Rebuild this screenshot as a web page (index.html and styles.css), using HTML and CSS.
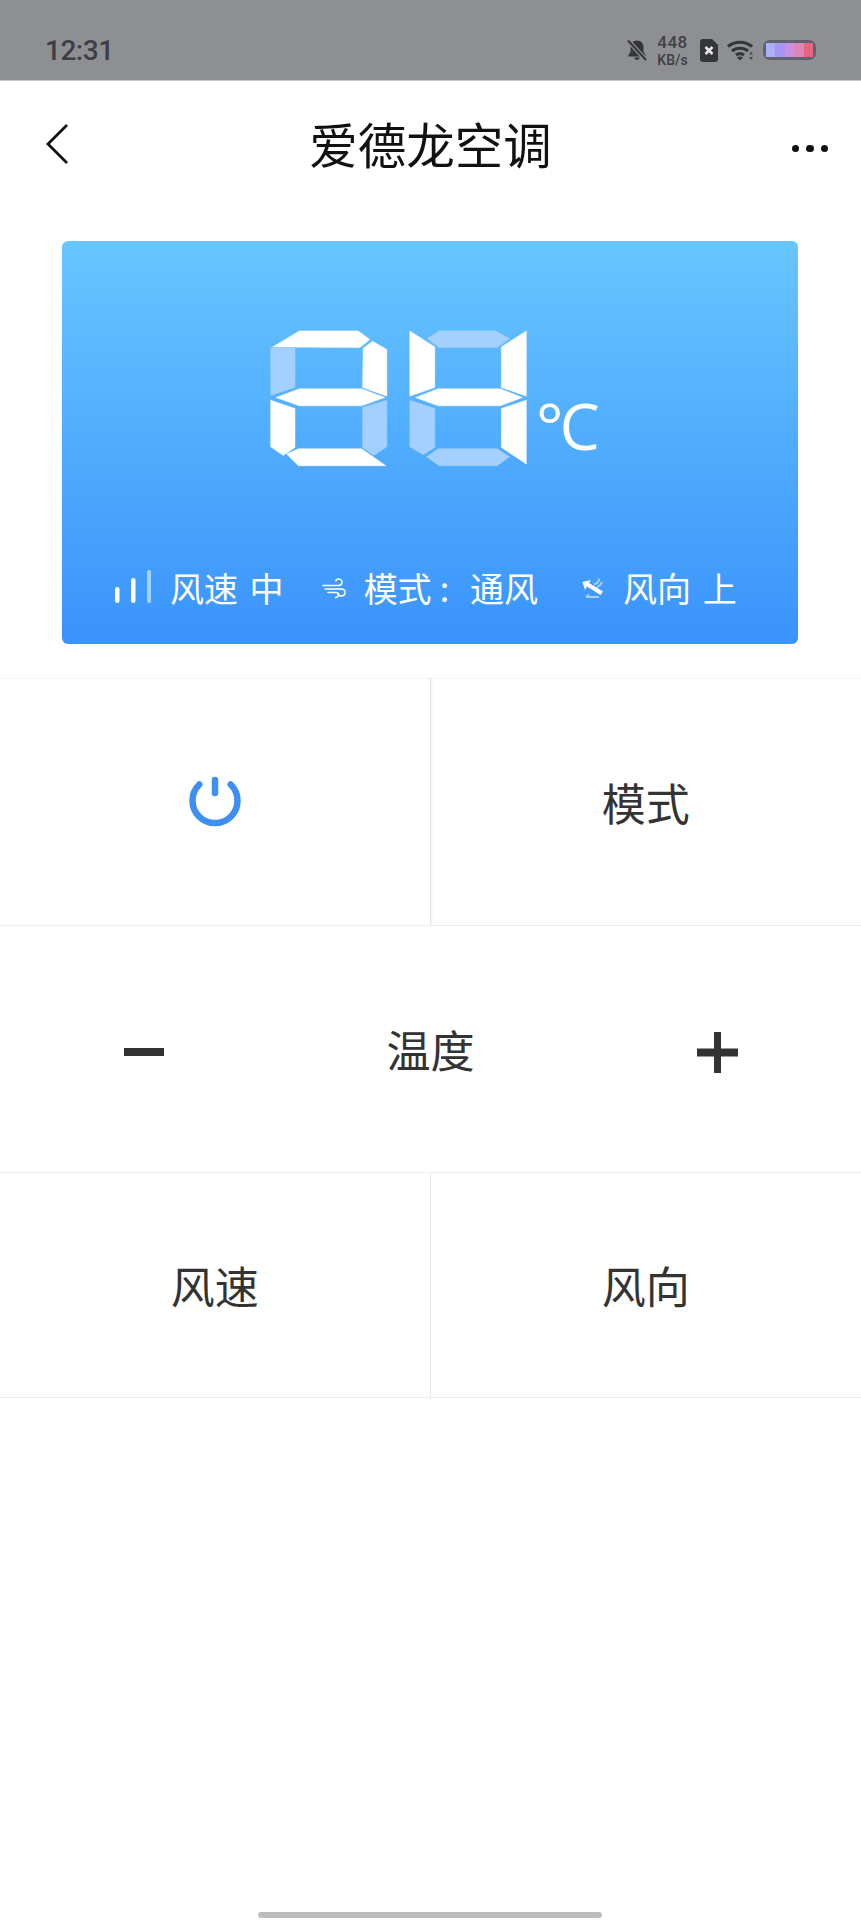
FILE: index.html
```html
<!DOCTYPE html>
<html lang="zh-CN">
<head>
<meta charset="utf-8">
<title>爱德龙空调</title>
<link rel="stylesheet" href="styles.css">
</head>
<body>
<div class="screen">
  <header class="status">
    <span class="time">12:31</span>
    <div class="status-icons">
      <svg class="bell" viewBox="0 0 20 22" width="20" height="22"><path d="M10 1.500c-3.800 0-6.500 2.800-6.500 6.400v5.200L1.500 16v1.500h17V16l-2-2.900V7.900c0-3.600-2.700-6.400-6.500-6.400zM7.300 18.500c.3 1.600 1.400 2.500 2.700 2.500s2.400-.9 2.700-2.500z" fill="#35363b"/><path d="M1 1.500 19 21" stroke="#8e8f93" stroke-width="4.500"/><path d="M1 1.500 19 21" stroke="#35363b" stroke-width="2"/></svg>
      <div class="speed"><span>448</span><span>KB/s</span></div>
      <svg class="sim" viewBox="0 0 18 23" width="18" height="23"><path d="M3 0h9l6 6v14a3 3 0 0 1-3 3H3a3 3 0 0 1-3-3V3a3 3 0 0 1 3-3z" fill="#35363b"/><path d="M5.500 8l7 7M12.500 8l-7 7" stroke="#e8e8ea" stroke-width="2.600"/></svg>
      <svg class="wifi" viewBox="0 0 27 20" width="27" height="20"><g fill="none" stroke="#35363b" stroke-width="3.200"><path d="M1 6.500C7.500 .8 18.500 .8 25 6.500"/><path d="M5 11c4.500-3.700 11.500-3.700 16 0"/><path d="M9 15c2.600-1.900 5.400-1.900 8 0"/></g><path d="M10 17.500c2-1.200 4-1.200 6 0L13 20.500z" fill="#35363b"/><path d="M24 11.500l-2 3h4zM24 20l-2-3h4z" fill="#4a4b50"/></svg>
      <div class="battery"><span class="cell c1"></span><span class="cell c2"></span><span class="cell c3"></span><span class="cell c4"></span><span class="cell c5"></span></div>
    </div>
  </header>

  <nav class="nav">
    <svg class="back" viewBox="0 0 22 40" width="22" height="40"><path d="M21 1 2 20l19 19" fill="none" stroke="#111" stroke-width="2.800"/></svg>
    <h1 class="title">爱德龙空调</h1>
    <div class="more"><i></i><i></i><i></i></div>
  </nav>

  <section class="card">
    <div class="display">
      <svg class="digits" viewBox="60 60 772 410" width="257" height="137">
        <g class="seg-on">
          <polygon points="68,110 148,62 325,62 360,88 330,112"/>
          <polygon points="340,114 368,93 411,118 411,258 338,232"/>
          <polygon points="78,262 148,236 335,236 405,262 335,287 148,287"/>
          <polygon points="62,270 135,295 135,412 100,436 62,410"/>
          <polygon points="110,432 145,416 335,416 408,467 145,467"/>
          <polygon points="480,62 555,110 555,232 480,258"/>
          <polygon points="830,62 830,258 755,232 755,110"/>
          <polygon points="497,262 565,236 752,236 818,262 752,287 565,287"/>
          <polygon points="830,270 830,462 755,412 755,295"/>
        </g>
        <g class="seg-off">
          <polygon points="62,112 135,112 135,232 62,255"/>
          <polygon points="338,292 411,270 411,410 372,436 338,412"/>
          <polygon points="532,85 568,62 738,62 780,85 742,112 568,112"/>
          <polygon points="480,270 555,295 555,412 520,434 480,410"/>
          <polygon points="530,440 565,416 742,416 780,440 742,467 568,467"/>
        </g>
      </svg>
      <span class="unit">°C</span>
    </div>
    <div class="info">
      <svg class="bars" viewBox="0 0 36 34" width="36" height="34"><rect x="0" y="17" width="4.500" height="16" rx="2.200" fill="#fff"/><rect x="16" y="8" width="4.500" height="25" rx="2.200" fill="#fff"/><rect x="32" y="0" width="4.500" height="33" rx="2.200" fill="#a3d0ff"/></svg>
      <span class="info-text first">风速 中</span>
      <svg class="wind" viewBox="0 0 24 22" width="24" height="22"><g fill="none" stroke="#fff" stroke-width="1.500" stroke-linecap="round"><path d="M1 8.500h15c3 0 4-1.500 4-3.200S18.500 2 16.500 2 14 3 14 4"/><path d="M3 12h16c2.500 0 4 1.200 4 3.200S21.500 19 19 19c-1.500 0-2.500-1-2.500-2"/><path d="M6 15.500h8c1.500 0 2.500 1 2.500 2.300S15 20.500 13.500 20.500"/></g></svg>
      <span class="info-text second">模式<span class="colon">:</span>通风</span>
      <svg class="direction" viewBox="0 0 22 21" width="22" height="21"><path d="M.5 4 9 2 7 5 21 13.500l-2.500 3.500L5 8.500 3 12z" fill="#fff"/><path d="M12 6.500C15 5.500 17 3.500 17.500 .5M15 9c2-.5 4-2.500 5-5" fill="none" stroke="#a3d0ff" stroke-width="2"/><path d="M4 19h13M4 19l3-2.500" fill="none" stroke="#a3d0ff" stroke-width="2"/></svg>
      <span class="info-text third">风向 上</span>
    </div>
  </section>

  <section class="controls">
    <div class="row two tall light">
      <div class="cell-btn">
        <svg class="power" viewBox="0 0 52 52" width="52" height="52"><path d="M10.300 9.500a22.500 22.500 0 1 0 31.400 0" fill="none" stroke="#3d8ff0" stroke-width="6.500" stroke-linecap="round"/><path d="M26 5v13" fill="none" stroke="#3d8ff0" stroke-width="6.500" stroke-linecap="round"/></svg>
      </div>
      <div class="cell-btn">模式</div>
    </div>
    <div class="row three tall">
      <div class="cell-btn"><svg class="sign" viewBox="0 0 40 8" width="40" height="8"><rect width="40" height="8" fill="#333"/></svg></div>
      <div class="cell-btn">温度</div>
      <div class="cell-btn"><svg class="sign" viewBox="0 0 41 41" width="41" height="41"><path d="M0 16.500h41v8H0zM17 0h7v41h-7z" fill="#333"/></svg></div>
    </div>
    <div class="row two short">
      <div class="cell-btn">风速</div>
      <div class="cell-btn">风向</div>
    </div>
  </section>

  <div class="home"></div>
</div>
</body>
</html>
```

FILE: styles.css
```css
* { box-sizing: border-box; }
html, body { margin: 0; padding: 0; background: #fff; }
.screen {
  width: 861px;
  height: 1920px;
  display: flex;
  flex-direction: column;
  overflow: hidden;
  background: #fff;
  font-family: "Noto Sans CJK SC", "Noto Sans", sans-serif;
}
.status {
  height: 81px;
  flex: none;
  display: flex;
  align-items: center;
  justify-content: space-between;
  background: #8e8f93;
  border-bottom: 1px solid #c4c5c7;
  padding: 20px 45px 0 45px;
}
.time {
  font-family: Roboto, sans-serif;
  font-weight: 500;
  font-size: 28px;
  letter-spacing: -0.5px;
  color: #3e3f44;
}
.status-icons { display: flex; align-items: center; }
.bell { margin-right: 10px; }
.speed {
  display: flex;
  flex-direction: column;
  align-items: center;
  width: 31px;
  margin-right: 12px;
  font-family: Roboto, sans-serif;
  font-weight: 500;
  color: #3e3f44;
  line-height: normal;
}
.speed span:first-child { font-size: 17px; letter-spacing: 0.5px; }
.speed span:last-child { font-size: 14px; }
.sim { margin-right: 9px; }
.wifi { margin-right: 9px; }
.battery {
  width: 53px;
  height: 20px;
  display: flex;
  padding: 3px;
  border-radius: 7px;
  background: #5f6370;
  filter: blur(0.6px);
}
.cell { flex: 1; }
.c1 { background: #a9b0f4; }
.c2 { background: #a595ee; }
.c3 { background: #c98fe0; }
.c4 { background: #dd86b8; }
.c5 { background: #e8647f; }

.nav {
  height: 129px;
  flex: none;
  display: grid;
  grid-template-columns: 1fr auto 1fr;
  align-items: center;
  padding: 0 33px;
}
.back { margin: -4px 0 0 13px; }
.title {
  margin: -5px 0 0;
  font-size: 48.500px;
  font-weight: 400;
  line-height: 60px;
  color: #111;
}
.more { justify-self: end; display: flex; gap: 7px; margin-top: 6px; }
.more i { width: 7.500px; height: 7.500px; border-radius: 50%; background: #111; display: block; }

.card {
  flex: none;
  width: 736px;
  height: 403px;
  margin: 31px 0 0 62px;
  padding: 89px 0 0 208px;
  border-radius: 6px;
  background: linear-gradient(#67c6ff, #3a93fb);
}
.display { display: flex; align-items: flex-end; height: 137px; }
.digits { display: block; flex: none; filter: blur(0.4px); }
.seg-on { fill: #fff; stroke: #fff; stroke-width: 1.500px; stroke-linejoin: round; }
.seg-off { fill: #a3d0ff; stroke: #a3d0ff; stroke-width: 1.500px; stroke-linejoin: round; }
.unit {
  font-family: "Open Sans", sans-serif;
  font-weight: 400;
  font-size: 64px;
  line-height: 80px;
  letter-spacing: -4px;
  margin: 0 0 1px 9px;
  color: #fff;
}
.info {
  display: flex;
  align-items: center;
  height: 40px;
  margin: 101px 0 0 -155px;
}
.info-text {
  font-size: 34px;
  line-height: 40px;
  color: #fff;
  white-space: nowrap;
  word-spacing: 4px;
}
.bars { margin-top: -2px; }
.first { margin: 0 38px 0 19px; }
.second { margin: 0 44px 0 18px; }
.third { margin-left: 19px; }
.colon { margin: 0 21px 0 8px; }

.row {
  display: grid;
  border-top: 1px solid #ededed;
}
.light { border-top-color: #f5f5f5; }
.two { grid-template-columns: 1fr 1fr; }
.three { grid-template-columns: 1fr 1fr 1fr; }
.controls { margin-top: 34px; flex: none; border-bottom: 1px solid #ededed; }
.tall { height: 247px; }
.short { height: 225px; }
.cell-btn {
  display: flex;
  align-items: center;
  justify-content: center;
  font-size: 44px;
  color: #333;
}
.two .cell-btn:first-child { border-right: 1px solid #e4e4e4; }
.light .cell-btn:first-child { box-shadow: 1px 0 2px #eee; }
.power { margin-top: -3px; }
.sign { margin-top: 6px; }
.home {
  width: 344px;
  height: 6px;
  margin: auto 0 2px 258px;
  border-radius: 3px;
  background: #bdbdbd;
}
```
